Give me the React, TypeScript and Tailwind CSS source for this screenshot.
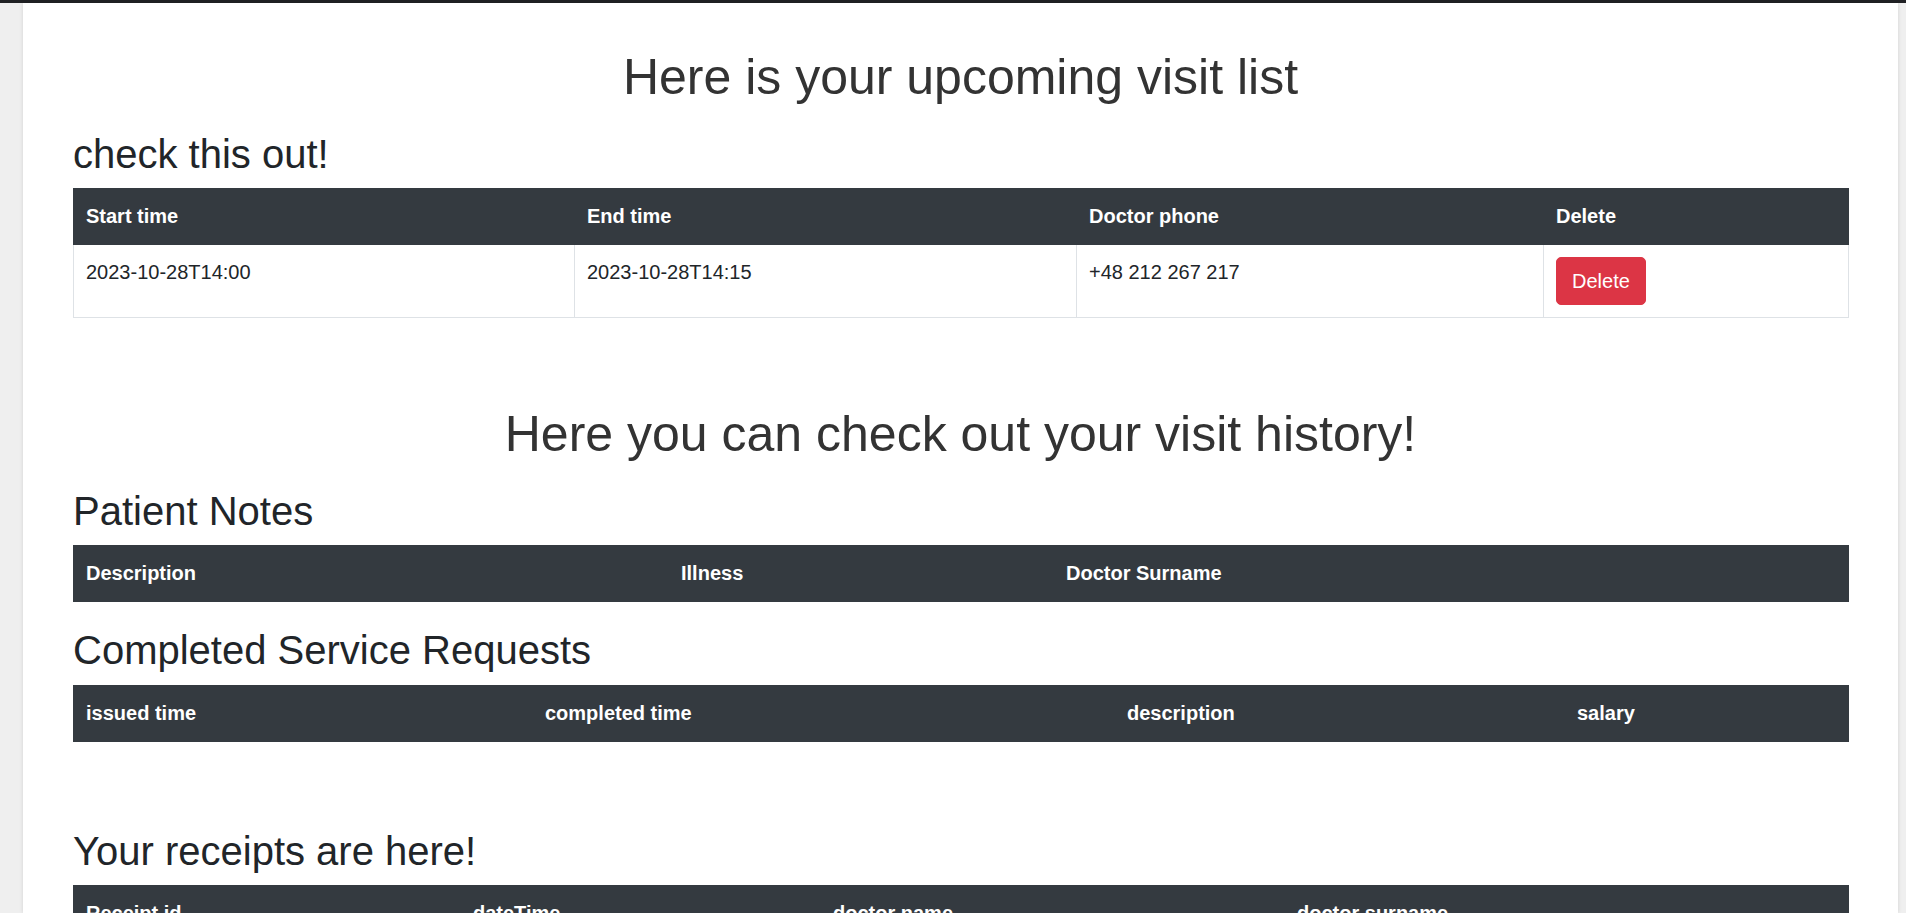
import * as React from "react";

type Col = { label: string; w: string };

function DataTable({ cols, rows }: { cols: Col[]; rows?: React.ReactNode[][] }) {
  return (
    <table className="w-full table-fixed border-collapse text-[20px] leading-[30px] text-[#212529]">
      <thead>
        <tr>
          {cols.map((c) => (
            <th
              key={c.label}
              className={`${c.w} border border-b-2 border-[#343a40] bg-[#343a40] px-[12px] py-[12px] text-left align-bottom font-bold text-white`}
            >
              {c.label}
            </th>
          ))}
        </tr>
      </thead>
      {rows && (
        <tbody>
          {rows.map((r, i) => (
            <tr key={i}>
              {r.map((cell, j) => (
                <td key={j} className="border border-[#dee2e6] px-[12px] py-[12px] align-top">
                  {cell}
                </td>
              ))}
            </tr>
          ))}
        </tbody>
      )}
    </table>
  );
}

export default function App() {
  const [visits, setVisits] = React.useState([
    { start: "2023-10-28T14:00", end: "2023-10-28T14:15", phone: "+48 212 267 217" },
  ]);

  const visitRows = visits.map((v, i) => [
    v.start,
    v.end,
    v.phone,
    <button
      onClick={() => setVisits((prev) => prev.filter((_, k) => k !== i))}
      className="rounded-[5px] border border-[#dc3545] bg-[#dc3545] px-[15px] py-[8px] text-[20px] leading-[30px] text-white"
    >
      Delete
    </button>,
  ]);

  return (
    <div className="h-[913px] overflow-hidden bg-[#efefef] font-['Liberation_Sans',Arial,sans-serif]">
      <div className="h-[3px] bg-[#202124]" />
      <div className="ml-[23px] mr-[8px] h-[910px] bg-white px-[50px] pt-[44px] shadow-[0_0_4px_rgba(0,0,0,0.12)]">
        <h1 className="mb-[23px] text-center text-[50px] leading-[60px] text-[#333333]">
          Here is your upcoming visit list
        </h1>
        <h2 className="mb-[10px] text-[40px] leading-[48px] text-[#212529]">check this out!</h2>
        <DataTable
          cols={[
            { label: "Start time", w: "w-[501px]" },
            { label: "End time", w: "w-[502px]" },
            { label: "Doctor phone", w: "w-[467px]" },
            { label: "Delete", w: "w-[305px]" },
          ]}
          rows={visitRows}
        />

        <h1 className="mb-[23px] mt-[86px] text-center text-[50px] leading-[60px] text-[#333333]">
          Here you can check out your visit history!
        </h1>
        <h2 className="mb-[10px] text-[40px] leading-[48px] text-[#212529]">Patient Notes</h2>
        <DataTable
          cols={[
            { label: "Description", w: "w-[595px]" },
            { label: "Illness", w: "w-[385px]" },
            { label: "Doctor Surname", w: "w-[795px]" },
          ]}
        />

        <h2 className="mb-[11px] mt-[24px] text-[40px] leading-[48px] text-[#212529]">
          Completed Service Requests
        </h2>
        <DataTable
          cols={[
            { label: "issued time", w: "w-[459px]" },
            { label: "completed time", w: "w-[582px]" },
            { label: "description", w: "w-[450px]" },
            { label: "salary", w: "w-[284px]" },
          ]}
        />

        <h2 className="mb-[10px] mt-[85px] text-[40px] leading-[48px] text-[#212529]">
          Your receipts are here!
        </h2>
        <DataTable
          cols={[
            { label: "Receipt id", w: "w-[387px]" },
            { label: "dateTime", w: "w-[360px]" },
            { label: "doctor name", w: "w-[464px]" },
            { label: "doctor surname", w: "w-[564px]" },
          ]}
        />
      </div>
    </div>
  );
}
